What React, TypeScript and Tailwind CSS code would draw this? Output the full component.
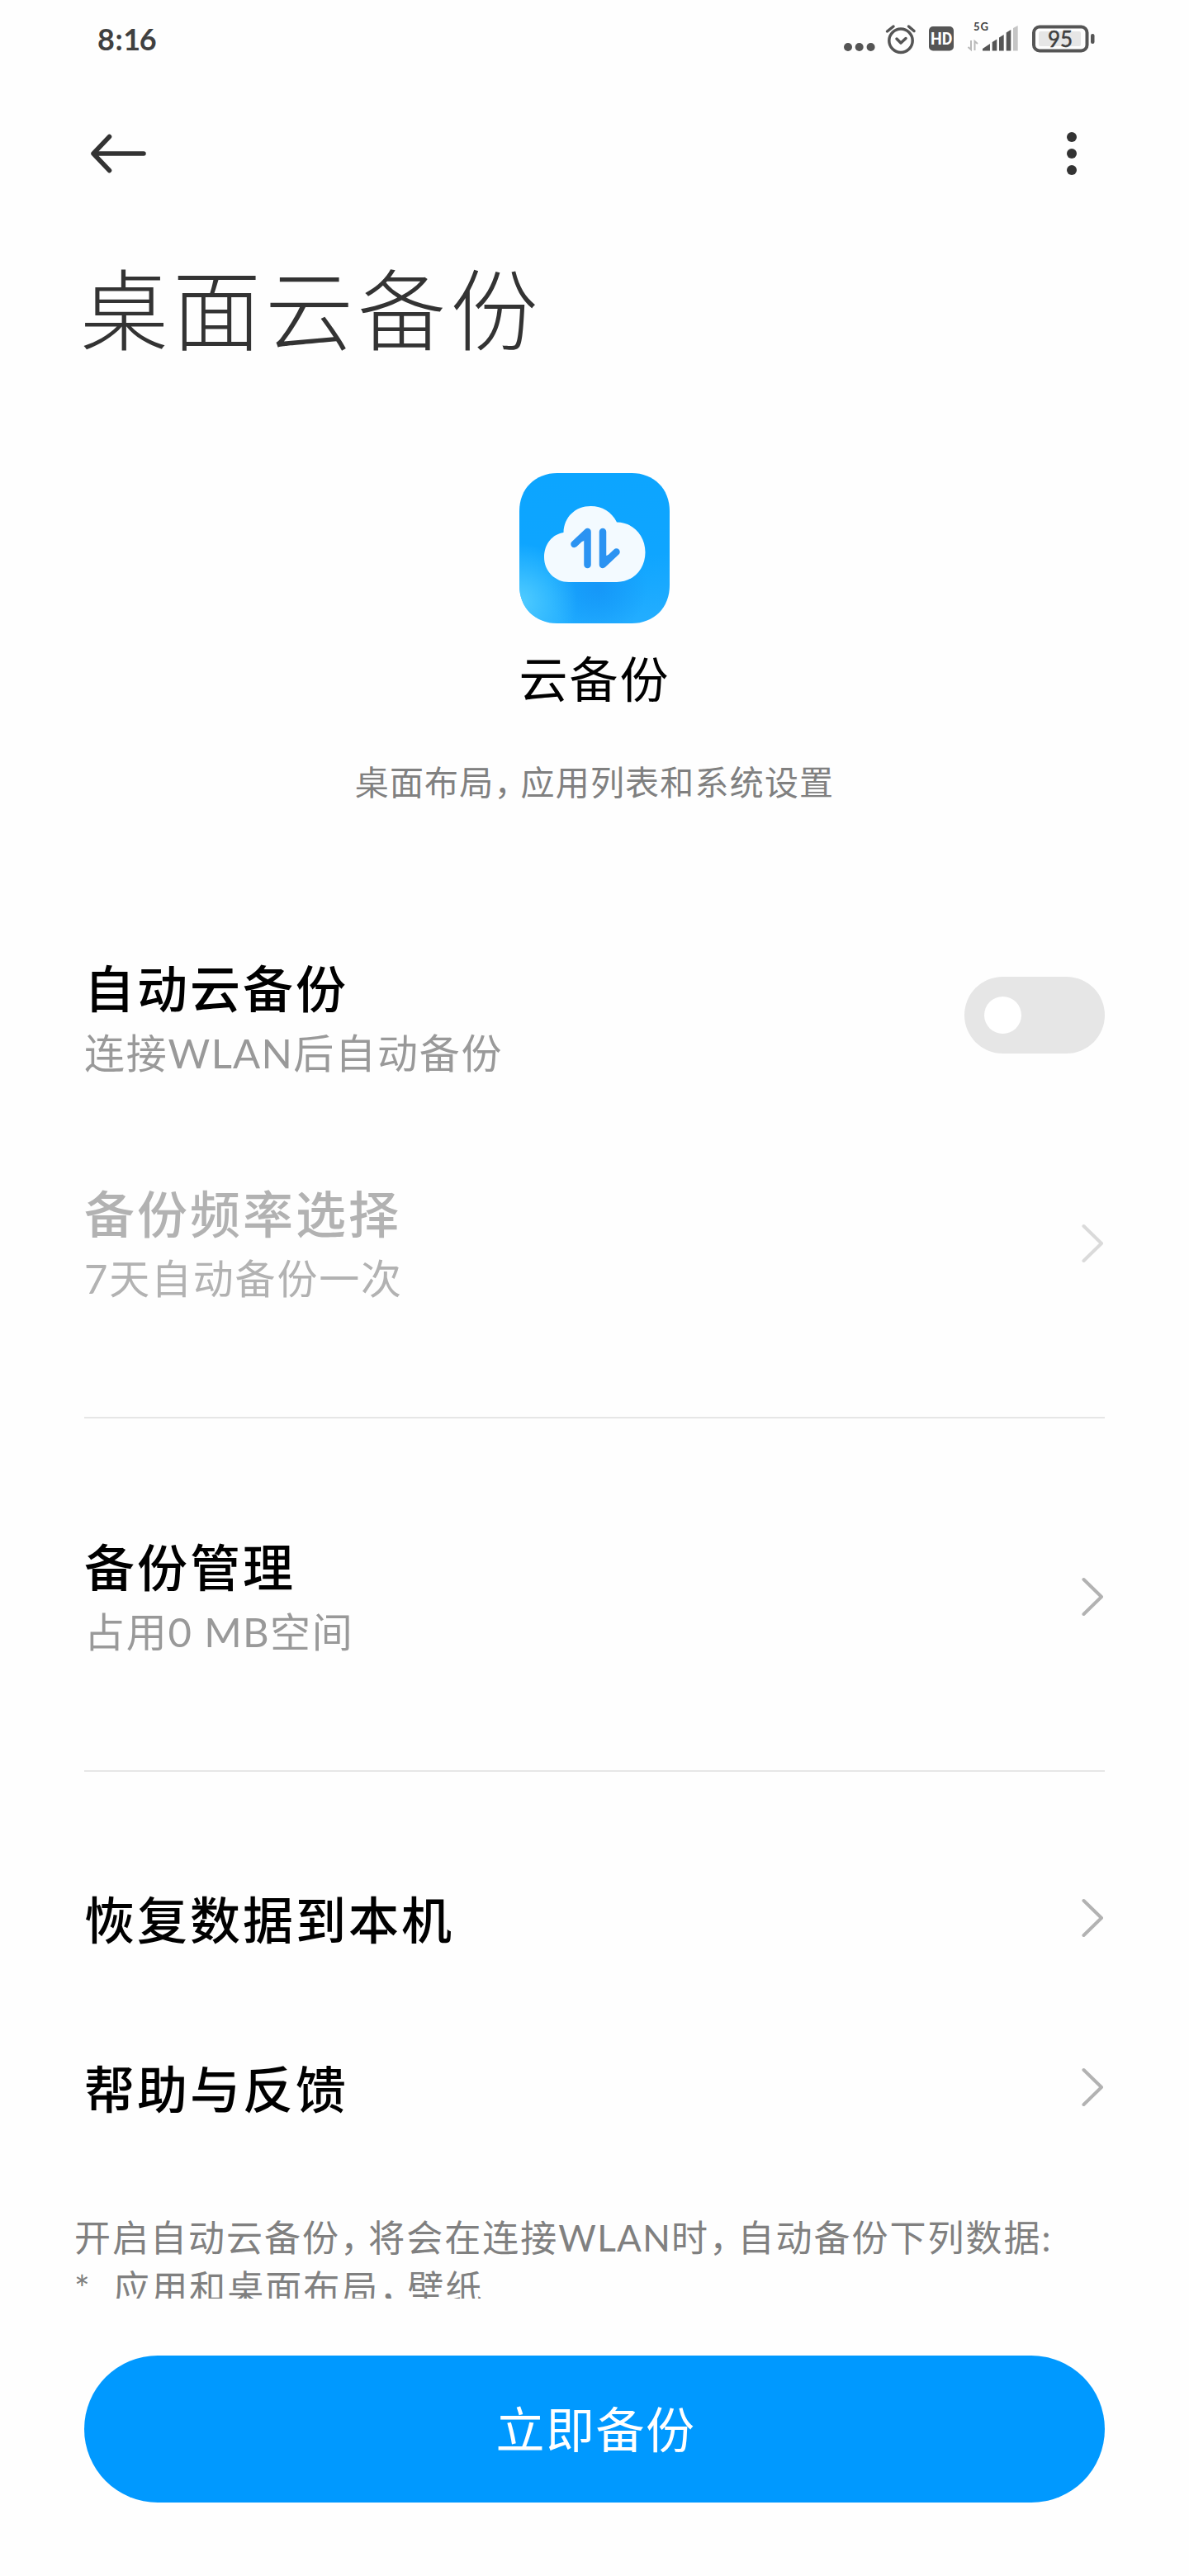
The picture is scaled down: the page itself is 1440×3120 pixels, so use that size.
import { useState } from 'react';
import type { ReactNode } from 'react';

const Chevron = ({ faded = false }: { faded?: boolean }) => (
    <svg width="28" height="48" viewBox="0 0 28 48" fill="none" className={`mb-1.5 ${faded ? 'text-[#dadada]' : 'text-[#b2b2b2]'}`}>
        <path d="M2.5 3L24 24L2.5 45" stroke="currentColor" strokeWidth="4" strokeLinecap="round" strokeLinejoin="round" />
    </svg>
);

// Latin letters sit a little tighter than the Chinese text around them
const Latin = ({ children }: { children: ReactNode }) => <span className="tracking-[1.3px]">{children}</span>;

const Comma = () => <span className="tracking-[-0.22em]">，</span>;

const StatusBar = () => (
    <div className="flex h-[92px] items-center justify-between pl-[118px] pr-[114px] text-[#404040]">
        <span className="mt-[2px] font-['Lato'] text-[36px] font-bold leading-none tracking-[-1.4px]">8<span className="mx-[2px]">:</span>16</span>
        <svg width="305" height="44" viewBox="1021 24 305 44" fill="none">
            <g fill="#555">
                <circle cx="1027" cy="57" r="5" />
                <circle cx="1040.700" cy="57" r="5" />
                <circle cx="1054.600" cy="57" r="5" />
            </g>
            <g stroke="#555" strokeWidth="3.500" strokeLinecap="round" strokeLinejoin="round">
                <circle cx="1091" cy="49.300" r="14.200" />
                <path d="M1086 47L1091 52L1097 46.500M1074.500 38L1082 32M1100.500 32L1107 37.500" />
            </g>
            <rect x="1125" y="32" width="30" height="29.500" rx="5" fill="#555" />
            <text x="1140.300" y="54" textAnchor="middle" fontSize="19.500" fontWeight="700" fontFamily="Roboto, sans-serif" fill="#fff">HD</text>
            <text x="1188.500" y="36.500" textAnchor="middle" fontSize="13" fontWeight="700" fontFamily="Lato, sans-serif" fill="#404040" letterSpacing="1">5G</text>
            <path d="M1176 49V60L1172.500 57M1180.500 61V50L1184 53" stroke="#b9b9b9" strokeWidth="2" />
            <g fill="#555">
                <path d="M1190 61.500V59L1199 53V61.500Z" />
                <path d="M1201.700 61.500V51L1207.300 47.500V61.500Z" />
                <path d="M1210 61.500V45.500L1215.700 42V61.500Z" />
                <path d="M1218.700 61.500V39.500L1224.300 36V61.500Z" />
                <path d="M1227 61.500V34L1232.700 31V61.500Z" fill="#c5c5c5" />
            </g>
            <rect x="1252" y="32.500" width="64.500" height="29" rx="7" stroke="#555" strokeWidth="4" />
            <rect x="1258" y="38" width="51" height="18" rx="2" fill="#e6e6e6" />
            <rect x="1321" y="41" width="4.500" height="12" rx="2.200" fill="#555" />
            <text x="1284" y="56.500" textAnchor="middle" fontSize="26" fontFamily="Lato, sans-serif" fill="#404040" stroke="#404040" strokeWidth="0.500">95</text>
        </svg>
    </div>
);

const AppIcon = () => (
    <svg width="182" height="182" viewBox="0 0 182 182" fill="none">
        <defs>
            <linearGradient id="base" x1="80" y1="0" x2="110" y2="182" gradientUnits="userSpaceOnUse">
                <stop offset="0" stopColor="#0ca5ff" />
                <stop offset="0.6" stopColor="#0fa5ff" />
                <stop offset="1" stopColor="#22adff" />
            </linearGradient>
            <radialGradient id="glow" cx="0" cy="155" r="70" gradientUnits="userSpaceOnUse">
                <stop offset="0" stopColor="#50ccff" />
                <stop offset="1" stopColor="#50ccff" stopOpacity="0" />
            </radialGradient>
            <radialGradient id="shade" cx="95" cy="138" r="60" gradientUnits="userSpaceOnUse">
                <stop offset="0" stopColor="#1697f8" />
                <stop offset="1" stopColor="#1697f8" stopOpacity="0" />
            </radialGradient>
            <clipPath id="tile">
                <path d="M46 0H136C163 0 182 19 182 46V136C182 163 163 182 136 182H46C19 182 0 163 0 136V46C0 19 19 0 46 0Z" />
            </clipPath>
        </defs>
        <g clipPath="url(#tile)">
            <rect width="182" height="182" fill="url(#base)" />
            <rect width="182" height="182" fill="url(#shade)" />
            <rect width="182" height="182" fill="url(#glow)" />
        </g>
        <path
            d="M60 132C43 132 30 118.500 30 102C30 86 40 74 53.500 72C54 53 68 40 86.500 40C100 40 112 47 118 59.500C137 59.500 152.500 75 152.500 96C152.500 116 138 132 118 132Z"
            fill="#f3faff"
        />
        <g stroke="#2b93f2" strokeWidth="8.500" strokeLinecap="round" strokeLinejoin="round">
            <path d="M66.500 86L82.500 71V111" />
            <path d="M101 71V111L117.500 95.500" />
        </g>
        <path d="M82 70.500L67 85.500L78.500 82Z M101 111.500L117 96.500L105 100Z" fill="#2b93f2" />
    </svg>
);

type RowProps = {
    title: string;
    desc?: ReactNode;
    disabled?: boolean;
    children?: ReactNode;
};

const Row = ({ title, desc, disabled, children }: RowProps) => (
    <div className="flex items-center justify-between">
        <div>
            <div className={`text-[61px] font-medium leading-[80px] tracking-[3px] ${disabled ? 'text-[#b2b2b2]' : 'text-black'}`}>{title}</div>
            {desc && (
                <div className={`text-[49px] leading-[75px] tracking-[1.8px] ${disabled ? 'text-[#b2b2b2]' : 'text-[#999]'}`}>{desc}</div>
            )}
        </div>
        {children ?? <Chevron faded={disabled} />}
    </div>
);

const App = () => {
    const [autoBackup, setAutoBackup] = useState(false);

    return (
        <div className="flex h-[3120px] w-[1440px] flex-col overflow-hidden bg-[#fefefe] font-['Lato','Noto_Sans_CJK_SC',sans-serif]">
            <StatusBar />

            {/* Toolbar */}
            <div className="flex h-[188px] items-center justify-between pl-[109px] pr-[136px]">
                <svg width="68" height="48" viewBox="0 0 68 48" fill="none">
                    <path d="M23.500 3.500L4 24L23.500 44.500M4 24H65" stroke="#333" strokeWidth="5.500" strokeLinecap="round" strokeLinejoin="round" />
                </svg>
                <div className="flex flex-col gap-2">
                    <span className="size-3 rounded-full bg-[#333]" />
                    <span className="size-3 rounded-full bg-[#333]" />
                    <span className="size-3 rounded-full bg-[#333]" />
                </div>
            </div>

            <h1 className="ml-[97px] mt-5 text-[107px] font-light leading-[150px] tracking-[5px] text-[#333]">桌面云备份</h1>

            <div className="mt-[123px] flex flex-col items-center">
                <AppIcon />
                <div className="mt-7 text-[59px] leading-[80px] tracking-[2px] text-black">云备份</div>
                <div className="mt-[55px] text-[41px] leading-[60px] tracking-[1.2px] text-[#808080]">桌面布局<Comma />应用列表和系统设置</div>
            </div>

            <div className="mt-[180px] flex flex-col px-[102px]">
                <Row title="自动云备份" desc={<>连接<Latin>WLAN</Latin>后自动备份</>}>
                    <button
                        onClick={() => setAutoBackup(!autoBackup)}
                        className={`mb-[12px] flex h-[93px] w-[170px] items-center rounded-full px-6 ${autoBackup ? 'justify-end bg-[#0099ff]' : 'bg-[#e6e6e6]'}`}
                    >
                        <span className="size-[45px] rounded-full bg-white" />
                    </button>
                </Row>

                <div className="mt-[118px]">
                    <Row title="备份频率选择" desc="7天自动备份一次" disabled={!autoBackup} />
                </div>

                <div className="mt-[130px] h-[2px] bg-[#e6e6e6]" />

                <div className="mt-[141px]">
                    <Row title="备份管理" desc={<>占用<Latin>0 MB</Latin>空间</>} />
                </div>

                <div className="mt-[130px] h-[2px] bg-[#e6e6e6]" />

                <div className="mt-[140px]">
                    <Row title="恢复数据到本机" />
                </div>
                <div className="mt-[125px]">
                    <Row title="帮助与反馈" />
                </div>
            </div>

            <div className="ml-[90px] mt-[109px] h-[104px] overflow-hidden text-[44px] leading-[61px] tracking-[2px] text-[#808080]">
                <div className="whitespace-pre">开启自动云备份<Comma />将会在连接<Latin>WLAN</Latin>时<Comma />自动备份下列数据:</div>
                <div className="whitespace-pre">*  应用和桌面布局<Comma />壁纸</div>
            </div>

            <button className="mx-[102px] mt-[69px] h-[178px] rounded-full bg-[#0099ff] pl-[3px] pt-[2px] text-[59px] tracking-[1.5px] text-white">立即备份</button>
        </div>
    );
};

export default App;
